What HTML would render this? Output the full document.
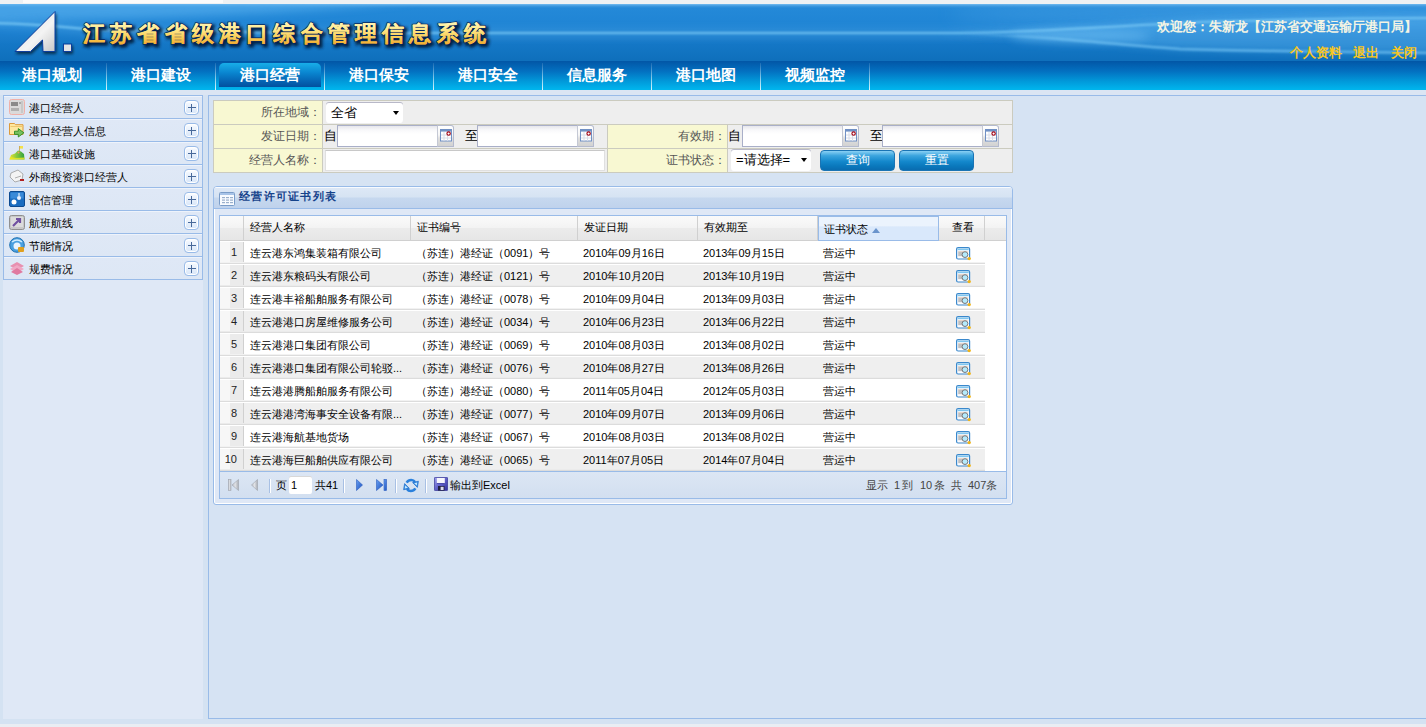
<!DOCTYPE html>
<html><head><meta charset="utf-8">
<style>
*{margin:0;padding:0;box-sizing:border-box}
html,body{width:1426px;height:727px;overflow:hidden}
body{position:relative;background:#d4e2f2;font-family:"Liberation Sans",sans-serif;font-size:12px;color:#000}
.abs{position:absolute}
#topstrip{left:0;top:0;width:1426px;height:4px;background:#eef1f3}
#botstrip{left:0;top:724px;width:1426px;height:3px;background:#e9edf3}
#banner{left:0;top:4px;width:1426px;height:57px;overflow:hidden;background:linear-gradient(to bottom,#74bcf0 0px,#3e98de 2px,#2489d8 4px,#1f84d4 22px,#1d80d0 28px,#1a7ccb 34px,#1477c6 40px,#0f70bc 56px)}
#nav{left:0;top:61px;width:1426px;height:29px;background:linear-gradient(to bottom,#0256a6 0%,#0370c0 35%,#0199da 70%,#00b6ee 100%)}
#navstrip{left:0;top:90px;width:1426px;height:5px;background:#dbe5f3}
.navsep{position:absolute;top:2px;width:1px;height:27px;background:linear-gradient(to bottom,rgba(255,255,255,0.1),rgba(255,255,255,0.85))}
.navitem{position:absolute;top:0;height:29px;line-height:27px;width:109px;text-align:center;color:#fff;font-weight:bold;font-size:15px}
#active{left:219px;top:2px;width:102px;height:24px;border-radius:5px 5px 0 0;background:linear-gradient(to bottom,#18aee8 0%,#0a86d0 40%,#0460b0 80%,#02509e 100%)}
#leftpanel{left:3px;top:95px;width:200px;height:624px;background:#dfe8f6}
#mainpanel{left:208px;top:95px;width:1218px;height:624px;background:#d6e3f3;border-top:1px solid #99bbe8;border-left:1px solid #99bbe8;border-bottom:1px solid #99bbe8}

.title{position:absolute;left:83px;top:13px;font-size:22px;font-weight:900;letter-spacing:5.2px;white-space:nowrap;line-height:32px}
.title.sh{color:#0a2a58;-webkit-text-stroke:2.2px #0a2656;text-shadow:1px 2px 3px #031a40;left:83px;top:14px;opacity:0.9}
.title.fg{background:linear-gradient(to bottom,#fffbd0 0%,#fff2a0 30%,#f8cc60 70%,#f0aa30 100%);-webkit-background-clip:text;background-clip:text;color:transparent}
#welcome span{position:absolute;top:14px;color:#f4f4e4;font-weight:bold;font-size:13px;white-space:nowrap;line-height:18px}
#links span{position:absolute;top:40px;color:#f8c622;font-weight:bold;font-size:13px;white-space:nowrap;line-height:18px}

#side{position:absolute;left:3px;top:95px;width:200px;border:1px solid #99bbe8;border-bottom:none}
.srow{position:relative;height:23px;border-bottom:1px solid #99bbe8;background:linear-gradient(to bottom,#eef3fb 0,#eef3fb 1px,#dfe8f6 1px,#dde7f5 100%);font-size:11px;color:#000}
.srow .ic{position:absolute;left:5px;top:3px;width:16px;height:16px}
.srow .tx{position:absolute;left:25px;top:1px;line-height:23px;white-space:nowrap}
.srow .pl{position:absolute;left:180px;top:4px;width:15px;height:15px;border:1px solid #99bbe8;border-radius:4px;background:linear-gradient(to bottom,#ffffff 0,#ffffff 1px,#f2f7fe 2px,#d8e6f8 100%);box-shadow:inset 0 0 0 1px #fff}
.srow .pl:before{content:"";position:absolute;left:2.5px;top:5.8px;width:8px;height:1.4px;background:#48699a}
.srow .pl:after{content:"";position:absolute;left:5.8px;top:2.5px;width:1.4px;height:8px;background:#48699a}

#form{position:absolute;left:213px;top:100px;width:800px;height:73px;background:#eeeeee;border:1px solid #cbcbbf}
.fl{position:absolute;background:#f8f8d2;color:#555;font-size:12px;text-align:right;line-height:23px;padding-right:1px;white-space:nowrap}
.hl{position:absolute;height:1px;background:#cbcbbf}
.vl{position:absolute;width:1px;background:#cbcbbf}
.sel{position:absolute;background:#fff;border-radius:3px;font-size:13px;line-height:20px;padding-left:5px;white-space:nowrap;box-shadow:0 -1px 0 #b8b8c8}
.sel .arr{position:absolute;right:4px;top:8px;width:0;height:0;border-left:3.5px solid transparent;border-right:3.5px solid transparent;border-top:4px solid #000}
.inp{position:absolute;height:22px;background:linear-gradient(to bottom,#e6e6ec 0,#f8f8fa 4px,#fff 8px);border:1px solid #a9afc8}
.cal{position:absolute;width:17px;height:22px;border:1px solid #b4bace;border-left-color:#c4c8d4;border-radius:0 3px 0 0;background:linear-gradient(to bottom,#fff 0,#f6f6f6 45%,#e0e0e0 60%,#d2d2d2 100%)}
.cal svg{position:absolute;left:1px;top:3px}
.ftx{position:absolute;font-size:13px;line-height:22px;color:#000;white-space:nowrap}
.btn{position:absolute;height:21px;width:75px;border-radius:4px;border:1px solid #1a74b4;background:linear-gradient(to bottom,#8ad0f4 0%,#3aa4de 25%,#1488cc 55%,#0a78bc 80%,#0a6cb0 100%);color:#fff;text-align:center;line-height:19px;font-size:12px}

#gp{position:absolute;left:213px;top:186px;width:800px;height:319px;border:1px solid #99bbe8;border-radius:4px 4px 3px 3px;background:#dfe8f6;box-shadow:inset 1px 0 0 #fff, inset 0 -1px 0 #fff, inset -1px 0 0 #fff}
#gph{position:absolute;left:0;top:0;width:798px;height:22px;border-bottom:1px solid #99bbe8;border-radius:3px 3px 0 0;background:linear-gradient(to bottom,#f8fbff 0,#f8fbff 1px,#dde8f6 1px,#d6e3f3 10px,#c6d8ef 11px,#bfd2ec 100%)}
#gph .t{position:absolute;left:25px;top:1px;line-height:17px;font-size:11px;font-weight:bold;color:#15428b;white-space:nowrap;letter-spacing:1.3px}
#grid{position:absolute;left:5px;top:28px;width:788px;height:284px;border:1px solid #99bbe8;background:#fff;overflow:hidden}
.gh{position:absolute;left:0;top:0;width:786px;height:25px;border-bottom:1px solid #d0d0d0;background:linear-gradient(to bottom,#fafafa 0%,#f3f3f3 50%,#ebebeb 52%,#e6e6e6 100%)}
.ghc{position:absolute;top:0;height:24px;line-height:23px;font-size:11px;padding-left:6px;white-space:nowrap;border-right:1px solid #d0d0d0}
.gr{position:absolute;left:0;width:765px;height:23px;background:linear-gradient(to bottom,#fff 0,#fff 21px,#f2f2f2 21px,#f2f2f2 22px,#dcdcdc 22px,#dcdcdc 23px)}
.gr.alt{background:linear-gradient(to bottom,#fff 0,#fff 1px,#efefef 1px,#efefef 21px,#ebebeb 21px,#ebebeb 22px,#dcdcdc 22px,#dcdcdc 23px)}
.gc{position:absolute;top:2px;height:19px;line-height:20px;font-size:11px;padding-left:5px;white-space:nowrap;overflow:hidden}
.rn{position:absolute;left:0;top:1px;width:24px;height:20px;background:linear-gradient(to right,#f7f7f7 0,#f7f7f7 10px,#ebebeb 10px,#ebebeb 100%);border-right:1px solid #d0d0d0;text-align:right;padding-right:6px;line-height:20px;font-size:11px;color:#222}
.tb{position:absolute;left:0;top:255px;width:786px;height:27px;border-top:1px solid #99bbe8;background:linear-gradient(to bottom,#dce6f4 0%,#d2dff0 100%)}

.vw{position:absolute;top:6px;width:16px;height:15px}
.sorth{position:absolute;left:598px;top:0;width:121px;height:25px;border:1px solid #99bbe8;background:linear-gradient(to bottom,#ebf3fd 0%,#ebf3fd 40%,#d9e8fb 42%,#d9e8fb 100%)}
.sorth .tx{position:absolute;left:5px;top:1px;line-height:23px;font-size:11px;white-space:nowrap}
.sorth .ar{position:absolute;left:53px;top:11px;width:0;height:0;border-left:4px solid transparent;border-right:4px solid transparent;border-bottom:5px solid #6a94cc}
.tbi{position:absolute}
.tsep{position:absolute;top:7px;width:2px;height:14px;border-left:1px solid #a8c0e4;border-right:1px solid #fff}
.ttx{position:absolute;top:0;line-height:26px;font-size:11px;white-space:nowrap;color:#000}
</style></head><body>
<div id="topstrip" class="abs"></div>
<div class="abs" style="left:23px;top:0;width:200px;height:3px;background:#fbfbfb"></div>
<div id="banner" class="abs">
<svg class="abs" style="left:0;top:0" width="1426" height="57" viewBox="0 4 1426 57">
  <defs>
   <filter id="b1" x="-10%" y="-100%" width="120%" height="300%"><feGaussianBlur stdDeviation="1.2"/></filter>
   <filter id="b4" x="-10%" y="-100%" width="120%" height="300%"><feGaussianBlur stdDeviation="4"/></filter>
   <filter id="b8" x="-20%" y="-200%" width="140%" height="500%"><feGaussianBlur stdDeviation="9"/></filter>
  </defs>
  <path d="M-20,0 L420,0 C300,14 150,20 -20,21Z" fill="#5cb2f0" opacity="0.6" filter="url(#b4)"/>
  <ellipse cx="1250" cy="14" rx="300" ry="10" fill="#5aaeec" opacity="0.4" filter="url(#b8)"/>
  <path d="M-10,23 C40,24 60,27 100,30 C200,32 300,33 460,33 L960,33 C1040,32 1100,27 1200,22 C1300,19 1380,18 1440,18" stroke="#6cbcf0" stroke-width="7" fill="none" opacity="0.3" filter="url(#b4)"/>
  <path d="M940,33 C1040,32 1100,27 1200,22 C1300,19 1380,18 1440,18 L1440,53 C1350,52 1250,51 1180,49 C1100,44 1040,35 940,33.5Z" fill="#5cb2ee" opacity="0.45" filter="url(#b4)"/>
  <ellipse cx="1080" cy="36" rx="70" ry="7" fill="#70c0f4" opacity="0.5" filter="url(#b4)"/>
  <path d="M-10,23 C40,24 60,27 100,30 C200,32 300,33 460,33 L960,33 C1040,32 1100,27 1200,22 C1300,19 1380,18 1440,18" stroke="#7ccaf6" stroke-width="2.2" fill="none" opacity="0.85" filter="url(#b1)"/>
  <linearGradient id="lcg" gradientUnits="userSpaceOnUse" x1="960" y1="0" x2="1060" y2="0"><stop offset="0" stop-color="#74c4f4" stop-opacity="0"/><stop offset="1" stop-color="#74c4f4" stop-opacity="1"/></linearGradient><path d="M940,33.2 C1040,35 1100,43 1180,49 C1250,51 1350,52 1440,53" stroke="url(#lcg)" stroke-width="2.4" fill="none" opacity="0.75" filter="url(#b1)"/>
 </svg>
 <svg class="abs" style="left:0;top:0" width="600" height="57" viewBox="0 4 600 57">
  <defs>
   <linearGradient id="lg" x1="0" y1="0" x2="1" y2="1"><stop offset="0" stop-color="#d4d4d4"/><stop offset="0.6" stop-color="#f4f4f4"/><stop offset="1" stop-color="#c8c8c8"/></linearGradient>
   <filter id="sh" x="-20%" y="-20%" width="140%" height="140%"><feGaussianBlur in="SourceAlpha" stdDeviation="1.5"/><feOffset dx="1" dy="2"/><feComponentTransfer><feFuncA type="linear" slope="0.6"/></feComponentTransfer><feMerge><feMergeNode/><feMergeNode in="SourceGraphic"/></feMerge></filter>
  <linearGradient id="tg" x1="0" y1="0" x2="0" y2="1"><stop offset="0" stop-color="#fff8c0"/><stop offset="0.35" stop-color="#ffe888"/><stop offset="0.7" stop-color="#f8c850"/><stop offset="1" stop-color="#f0a428"/></linearGradient>
  <filter id="tsh" x="-5%" y="-30%" width="110%" height="160%"><feGaussianBlur stdDeviation="1.6"/></filter>
  </defs>
  <g style="font-family:'Liberation Sans',sans-serif;font-size:22px;font-weight:bold;letter-spacing:5.2px">
  <text x="85" y="43" fill="#021838" stroke="#021838" stroke-width="3" filter="url(#tsh)" opacity="0.9">江苏省省级港口综合管理信息系统</text>
  <text x="83" y="41" fill="#0a2a60" stroke="#0a2a60" stroke-width="1.8" stroke-linejoin="round">江苏省省级港口综合管理信息系统</text>
  <text x="83" y="41" fill="url(#tg)" stroke="url(#tg)" stroke-width="0.15" stroke-linejoin="round">江苏省省级港口综合管理信息系统</text>
  </g>
  <g filter="url(#sh)">
  <polygon points="55,11.5 55,51.5 43,51.5 42.5,40 30.5,51.5 15,51.5" fill="url(#lg)" stroke="#0b3c9c" stroke-width="1" stroke-linejoin="miter"/>
  <rect x="63.5" y="44" width="8" height="7.5" fill="#e4e4e4" stroke="#0b3c9c" stroke-width="1"/>
  </g>
 </svg>
 <div id="welcome"><span style="left:1157px">欢迎您</span><span style="left:1196px">：</span><span style="left:1209px">朱新龙</span><span style="left:1248px">【江苏省交通运输厅港口局】</span></div>
 <div id="links"><span style="left:1290px">个人资料</span><span style="left:1353px">退出</span><span style="left:1391px">关闭</span></div>
</div>
<div id="nav" class="abs">
 <div id="active" class="abs"></div>
 <div class="navsep" style="left:106px"></div>
 <div class="navsep" style="left:215px"></div>
 <div class="navsep" style="left:324px"></div>
 <div class="navsep" style="left:433px"></div>
 <div class="navsep" style="left:542px"></div>
 <div class="navsep" style="left:651px"></div>
 <div class="navsep" style="left:760px"></div>
 <div class="navsep" style="left:869px"></div>
 <div class="navitem" style="left:-3px">港口规划</div>
 <div class="navitem" style="left:106px">港口建设</div>
 <div class="navitem" style="left:215px">港口经营</div>
 <div class="navitem" style="left:324px">港口保安</div>
 <div class="navitem" style="left:433px">港口安全</div>
 <div class="navitem" style="left:542px">信息服务</div>
 <div class="navitem" style="left:651px">港口地图</div>
 <div class="navitem" style="left:760px">视频监控</div>
</div>
<div id="navstrip" class="abs"></div>
<div id="leftpanel" class="abs"></div>
<div id="side"><div class="srow"><svg class="ic" viewBox="0 0 16 16"><rect x="0.5" y="0.5" width="15" height="15" rx="2" fill="#dadada" stroke="#f0b0a8"/><rect x="2" y="3" width="7" height="4" fill="#8a8a8a"/><rect x="10" y="3" width="3" height="2" fill="#a8a8a8"/><rect x="2" y="9" width="8" height="3" fill="#b0b0b0"/><rect x="12" y="2" width="2" height="12" fill="#c8c8c8"/></svg><div class="tx">港口经营人</div><div class="pl"></div></div><div class="srow"><svg class="ic" viewBox="0 0 16 16"><path d="M0.5 1.5h5l1 1.2h7.5v9.8H0.5z" fill="#fde8a0" stroke="#dc9a3c"/><rect x="1.5" y="4" width="12" height="1" fill="#f0c870"/><path d="M5.5 9.2h3.8V6.6l5.6 4.2-5.6 4.2v-2.6H5.5z" fill="#78c060" stroke="#2a8a20" stroke-width="0.9"/></svg><div class="tx">港口经营人信息</div><div class="pl"></div></div><div class="srow"><svg class="ic" viewBox="0 0 16 16"><defs><linearGradient id="hg" x1="0" y1="0" x2="1" y2="0"><stop offset="0" stop-color="#e8e030"/><stop offset="0.5" stop-color="#80c840"/><stop offset="1" stop-color="#30a040"/></linearGradient></defs><path d="M0.5 14.5 L2 10 L6 8.5 L9 5.5 L12 6.5 L15 9 L15.5 14.5Z" fill="url(#hg)"/><path d="M0.5 14.5 L15.5 14.5 L15.5 12.5 L7 13 L1 12Z" fill="#f0e820" opacity="0.8"/><rect x="10.5" y="1" width="3.5" height="2.6" fill="#f4e048"/><rect x="10.2" y="1" width="0.8" height="5" fill="#c8a040"/><circle cx="9.5" cy="7.5" r="1" fill="#f0a060"/></svg><div class="tx">港口基础设施</div><div class="pl"></div></div><div class="srow"><svg class="ic" viewBox="0 0 16 16"><path d="M2 5 L9 2 L14 6 L13 12 L6 14 L1 9Z" fill="#f4f4f4" stroke="#9a9a9a" stroke-width="0.8"/><path d="M6 10 L12 8" stroke="#b0b0b0"/><rect x="11" y="11" width="4" height="2" fill="#b02020"/></svg><div class="tx">外商投资港口经营人</div><div class="pl"></div></div><div class="srow"><svg class="ic" viewBox="0 0 16 16"><rect x="0.5" y="0.5" width="15" height="15" rx="1.5" fill="#1a6cc0" stroke="#0d4a90"/><rect x="1.5" y="1.5" width="13" height="6" fill="#3a8ad8"/><circle cx="5" cy="11" r="2.5" fill="#fff"/><circle cx="10" cy="7" r="2" fill="#e8f0ff"/><path d="M10 2 v3" stroke="#fff"/></svg><div class="tx">诚信管理</div><div class="pl"></div></div><div class="srow"><svg class="ic" viewBox="0 0 16 16"><rect x="0.5" y="1.5" width="15" height="14" rx="2" fill="#c8c8c8" stroke="#909090"/><rect x="2" y="3" width="12" height="10" fill="#dcdcdc"/><path d="M4 12 L11 5 M7 5 H11 V9" stroke="#7050a0" stroke-width="2.2" fill="none"/></svg><div class="tx">航班航线</div><div class="pl"></div></div><div class="srow"><svg class="ic" viewBox="0 0 16 16"><circle cx="8" cy="8" r="7.3" fill="#4aa0e0" stroke="#2070b0"/><path d="M3 5 Q8 1 13 5" stroke="#d0ecff" stroke-width="1.5" fill="none"/><circle cx="8" cy="9" r="3.5" fill="#e8f4ff"/><rect x="9" y="10" width="6" height="5" rx="1" fill="#e0a020"/></svg><div class="tx">节能情况</div><div class="pl"></div></div><div class="srow"><svg class="ic" viewBox="0 0 16 16"><path d="M1 6 L8 2 L15 6 L8 10Z" fill="#e890b0"/><path d="M1 9 L8 5 L15 9 L8 13Z" fill="#f0a8c4"/><path d="M2 12 L8 8 L14 12 L8 15Z" fill="#e07aa0"/></svg><div class="tx">规费情况</div><div class="pl"></div></div></div>
<div id="mainpanel" class="abs"></div>
<div id="form">
 <div class="fl" style="left:0;top:0;width:108px;height:23px">所在地域：</div>
 <div class="fl" style="left:0;top:24px;width:108px;height:23px">发证日期：</div>
 <div class="fl" style="left:0;top:48px;width:108px;height:23px">经营人名称：</div>
 <div class="fl" style="left:394px;top:24px;width:119px;height:23px">有效期：</div>
 <div class="fl" style="left:394px;top:48px;width:119px;height:23px">证书状态：</div>
 <div class="hl" style="left:0;top:23px;width:798px"></div>
 <div class="hl" style="left:0;top:47px;width:798px"></div>
 <div class="vl" style="left:108px;top:0;height:71px"></div>
 <div class="vl" style="left:393px;top:24px;height:47px"></div>
 <div class="vl" style="left:513px;top:24px;height:47px"></div>
 <div class="sel" style="left:112px;top:2px;width:77px;height:20px">全省<div class="arr"></div></div>
 <div class="ftx" style="left:110px;top:24px">自</div>
 <div class="inp" style="left:123px;top:24px;width:101px"></div>
 <div class="cal" style="left:223px;top:24px"><svg width="13" height="13" viewBox="0 0 13 13"><rect x="1.5" y="0.5" width="11" height="11.5" fill="#fff" stroke="#7090c4"/><rect x="2" y="1" width="10" height="1.6" fill="#7090c4"/><g stroke="#d8dce8" stroke-width="1"><path d="M5 3v9M8.5 3v9M2 6h10M2 9h10"/></g><circle cx="9.6" cy="4.6" r="1.7" fill="#fff" stroke="#a00012" stroke-width="1.1"/></svg></div>
 <div class="ftx" style="left:251px;top:24px">至</div>
 <div class="inp" style="left:263px;top:24px;width:101px"></div>
 <div class="cal" style="left:363px;top:24px"><svg width="13" height="13" viewBox="0 0 13 13"><rect x="1.5" y="0.5" width="11" height="11.5" fill="#fff" stroke="#7090c4"/><rect x="2" y="1" width="10" height="1.6" fill="#7090c4"/><g stroke="#d8dce8" stroke-width="1"><path d="M5 3v9M8.5 3v9M2 6h10M2 9h10"/></g><circle cx="9.6" cy="4.6" r="1.7" fill="#fff" stroke="#a00012" stroke-width="1.1"/></svg></div>
 <div class="inp" style="left:111px;top:49px;width:280px;height:21px;background:#fff;border-color:#e0e0e0;border-top-color:#c8c8c8"></div>
 <div class="ftx" style="left:514px;top:24px">自</div>
 <div class="inp" style="left:528px;top:24px;width:101px"></div>
 <div class="cal" style="left:628px;top:24px"><svg width="13" height="13" viewBox="0 0 13 13"><rect x="1.5" y="0.5" width="11" height="11.5" fill="#fff" stroke="#7090c4"/><rect x="2" y="1" width="10" height="1.6" fill="#7090c4"/><g stroke="#d8dce8" stroke-width="1"><path d="M5 3v9M8.5 3v9M2 6h10M2 9h10"/></g><circle cx="9.6" cy="4.6" r="1.7" fill="#fff" stroke="#a00012" stroke-width="1.1"/></svg></div>
 <div class="ftx" style="left:656px;top:24px">至</div>
 <div class="inp" style="left:668px;top:24px;width:101px"></div>
 <div class="cal" style="left:768px;top:24px"><svg width="13" height="13" viewBox="0 0 13 13"><rect x="1.5" y="0.5" width="11" height="11.5" fill="#fff" stroke="#7090c4"/><rect x="2" y="1" width="10" height="1.6" fill="#7090c4"/><g stroke="#d8dce8" stroke-width="1"><path d="M5 3v9M8.5 3v9M2 6h10M2 9h10"/></g><circle cx="9.6" cy="4.6" r="1.7" fill="#fff" stroke="#a00012" stroke-width="1.1"/></svg></div>
 <div class="sel" style="left:517px;top:49px;width:80px;height:21px">=请选择=<div class="arr"></div></div>
 <div class="btn" style="left:606px;top:49px">查询</div>
 <div class="btn" style="left:685px;top:49px">重置</div>
</div>
<div id="gp">
 <div id="gph"><svg style="position:absolute;left:5px;top:5px" width="16" height="14" viewBox="0 0 16 14"><rect x="0.5" y="0.5" width="15" height="13" rx="1" fill="#f8fbff" stroke="#7a9cc8"/><rect x="1" y="1" width="14" height="2" fill="#a8c4e8"/><g fill="#9ab0cc"><rect x="3" y="5" width="3" height="1.2"/><rect x="7" y="5" width="3" height="1.2"/><rect x="11" y="5" width="3" height="1.2"/><rect x="3" y="7.5" width="3" height="1.2"/><rect x="7" y="7.5" width="3" height="1.2"/><rect x="11" y="7.5" width="3" height="1.2"/><rect x="3" y="10" width="3" height="1.2"/><rect x="7" y="10" width="3" height="1.2"/><rect x="11" y="10" width="3" height="1.2"/></g></svg><div class="t">经营许可证书列表</div></div>
 <div id="grid"><div class="gh"><div class="ghc" style="left:0px;width:24px"></div><div class="ghc" style="left:24px;width:167px">经营人名称</div><div class="ghc" style="left:191px;width:167px">证书编号</div><div class="ghc" style="left:358px;width:120px">发证日期</div><div class="ghc" style="left:478px;width:120px">有效期至</div><div class="sorth"><div class="tx">证书状态</div><div class="ar"></div></div><div class="ghc" style="left:719px;width:46px;padding-left:2px;text-align:center">查看</div></div><div class="gr" style="top:25px"><div class="rn">1</div><div class="gc" style="left:25px;width:166px">连云港东鸿集装箱有限公司</div><div class="gc" style="left:191px;width:168px">（苏连）港经证（0091）号</div><div class="gc" style="left:358px;width:120px">2010年09月16日</div><div class="gc" style="left:478px;width:120px">2013年09月15日</div><div class="gc" style="left:598px;width:120px">营运中</div><div class="vw" style="left:736px"><svg width="16" height="15" viewBox="0 0 16 15"><rect x="0.6" y="0.6" width="13" height="11.4" rx="1.5" fill="#fdfdff" stroke="#3a88cc" stroke-width="1.2"/><rect x="1.5" y="1.6" width="11.2" height="1.6" fill="#80c6ee"/><rect x="2.2" y="4.2" width="5" height="5" fill="#c0c0c0"/><rect x="2.2" y="4.2" width="10" height="0.8" fill="#f0d8c8"/><circle cx="9" cy="7.6" r="2.9" fill="#b4eafc" stroke="#6e6a6a" stroke-width="0.9"/><circle cx="13.2" cy="11.6" r="1.7" fill="#f0b418"/></svg></div></div><div class="gr alt" style="top:48px"><div class="rn">2</div><div class="gc" style="left:25px;width:166px">连云港东粮码头有限公司</div><div class="gc" style="left:191px;width:168px">（苏连）港经证（0121）号</div><div class="gc" style="left:358px;width:120px">2010年10月20日</div><div class="gc" style="left:478px;width:120px">2013年10月19日</div><div class="gc" style="left:598px;width:120px">营运中</div><div class="vw" style="left:736px"><svg width="16" height="15" viewBox="0 0 16 15"><rect x="0.6" y="0.6" width="13" height="11.4" rx="1.5" fill="#fdfdff" stroke="#3a88cc" stroke-width="1.2"/><rect x="1.5" y="1.6" width="11.2" height="1.6" fill="#80c6ee"/><rect x="2.2" y="4.2" width="5" height="5" fill="#c0c0c0"/><rect x="2.2" y="4.2" width="10" height="0.8" fill="#f0d8c8"/><circle cx="9" cy="7.6" r="2.9" fill="#b4eafc" stroke="#6e6a6a" stroke-width="0.9"/><circle cx="13.2" cy="11.6" r="1.7" fill="#f0b418"/></svg></div></div><div class="gr" style="top:71px"><div class="rn">3</div><div class="gc" style="left:25px;width:166px">连云港丰裕船舶服务有限公司</div><div class="gc" style="left:191px;width:168px">（苏连）港经证（0078）号</div><div class="gc" style="left:358px;width:120px">2010年09月04日</div><div class="gc" style="left:478px;width:120px">2013年09月03日</div><div class="gc" style="left:598px;width:120px">营运中</div><div class="vw" style="left:736px"><svg width="16" height="15" viewBox="0 0 16 15"><rect x="0.6" y="0.6" width="13" height="11.4" rx="1.5" fill="#fdfdff" stroke="#3a88cc" stroke-width="1.2"/><rect x="1.5" y="1.6" width="11.2" height="1.6" fill="#80c6ee"/><rect x="2.2" y="4.2" width="5" height="5" fill="#c0c0c0"/><rect x="2.2" y="4.2" width="10" height="0.8" fill="#f0d8c8"/><circle cx="9" cy="7.6" r="2.9" fill="#b4eafc" stroke="#6e6a6a" stroke-width="0.9"/><circle cx="13.2" cy="11.6" r="1.7" fill="#f0b418"/></svg></div></div><div class="gr alt" style="top:94px"><div class="rn">4</div><div class="gc" style="left:25px;width:166px">连云港港口房屋维修服务公司</div><div class="gc" style="left:191px;width:168px">（苏连）港经证（0034）号</div><div class="gc" style="left:358px;width:120px">2010年06月23日</div><div class="gc" style="left:478px;width:120px">2013年06月22日</div><div class="gc" style="left:598px;width:120px">营运中</div><div class="vw" style="left:736px"><svg width="16" height="15" viewBox="0 0 16 15"><rect x="0.6" y="0.6" width="13" height="11.4" rx="1.5" fill="#fdfdff" stroke="#3a88cc" stroke-width="1.2"/><rect x="1.5" y="1.6" width="11.2" height="1.6" fill="#80c6ee"/><rect x="2.2" y="4.2" width="5" height="5" fill="#c0c0c0"/><rect x="2.2" y="4.2" width="10" height="0.8" fill="#f0d8c8"/><circle cx="9" cy="7.6" r="2.9" fill="#b4eafc" stroke="#6e6a6a" stroke-width="0.9"/><circle cx="13.2" cy="11.6" r="1.7" fill="#f0b418"/></svg></div></div><div class="gr" style="top:117px"><div class="rn">5</div><div class="gc" style="left:25px;width:166px">连云港港口集团有限公司</div><div class="gc" style="left:191px;width:168px">（苏连）港经证（0069）号</div><div class="gc" style="left:358px;width:120px">2010年08月03日</div><div class="gc" style="left:478px;width:120px">2013年08月02日</div><div class="gc" style="left:598px;width:120px">营运中</div><div class="vw" style="left:736px"><svg width="16" height="15" viewBox="0 0 16 15"><rect x="0.6" y="0.6" width="13" height="11.4" rx="1.5" fill="#fdfdff" stroke="#3a88cc" stroke-width="1.2"/><rect x="1.5" y="1.6" width="11.2" height="1.6" fill="#80c6ee"/><rect x="2.2" y="4.2" width="5" height="5" fill="#c0c0c0"/><rect x="2.2" y="4.2" width="10" height="0.8" fill="#f0d8c8"/><circle cx="9" cy="7.6" r="2.9" fill="#b4eafc" stroke="#6e6a6a" stroke-width="0.9"/><circle cx="13.2" cy="11.6" r="1.7" fill="#f0b418"/></svg></div></div><div class="gr alt" style="top:140px"><div class="rn">6</div><div class="gc" style="left:25px;width:166px">连云港港口集团有限公司轮驳...</div><div class="gc" style="left:191px;width:168px">（苏连）港经证（0076）号</div><div class="gc" style="left:358px;width:120px">2010年08月27日</div><div class="gc" style="left:478px;width:120px">2013年08月26日</div><div class="gc" style="left:598px;width:120px">营运中</div><div class="vw" style="left:736px"><svg width="16" height="15" viewBox="0 0 16 15"><rect x="0.6" y="0.6" width="13" height="11.4" rx="1.5" fill="#fdfdff" stroke="#3a88cc" stroke-width="1.2"/><rect x="1.5" y="1.6" width="11.2" height="1.6" fill="#80c6ee"/><rect x="2.2" y="4.2" width="5" height="5" fill="#c0c0c0"/><rect x="2.2" y="4.2" width="10" height="0.8" fill="#f0d8c8"/><circle cx="9" cy="7.6" r="2.9" fill="#b4eafc" stroke="#6e6a6a" stroke-width="0.9"/><circle cx="13.2" cy="11.6" r="1.7" fill="#f0b418"/></svg></div></div><div class="gr" style="top:163px"><div class="rn">7</div><div class="gc" style="left:25px;width:166px">连云港港腾船舶服务有限公司</div><div class="gc" style="left:191px;width:168px">（苏连）港经证（0080）号</div><div class="gc" style="left:358px;width:120px">2011年05月04日</div><div class="gc" style="left:478px;width:120px">2012年05月03日</div><div class="gc" style="left:598px;width:120px">营运中</div><div class="vw" style="left:736px"><svg width="16" height="15" viewBox="0 0 16 15"><rect x="0.6" y="0.6" width="13" height="11.4" rx="1.5" fill="#fdfdff" stroke="#3a88cc" stroke-width="1.2"/><rect x="1.5" y="1.6" width="11.2" height="1.6" fill="#80c6ee"/><rect x="2.2" y="4.2" width="5" height="5" fill="#c0c0c0"/><rect x="2.2" y="4.2" width="10" height="0.8" fill="#f0d8c8"/><circle cx="9" cy="7.6" r="2.9" fill="#b4eafc" stroke="#6e6a6a" stroke-width="0.9"/><circle cx="13.2" cy="11.6" r="1.7" fill="#f0b418"/></svg></div></div><div class="gr alt" style="top:186px"><div class="rn">8</div><div class="gc" style="left:25px;width:166px">连云港港湾海事安全设备有限...</div><div class="gc" style="left:191px;width:168px">（苏连）港经证（0077）号</div><div class="gc" style="left:358px;width:120px">2010年09月07日</div><div class="gc" style="left:478px;width:120px">2013年09月06日</div><div class="gc" style="left:598px;width:120px">营运中</div><div class="vw" style="left:736px"><svg width="16" height="15" viewBox="0 0 16 15"><rect x="0.6" y="0.6" width="13" height="11.4" rx="1.5" fill="#fdfdff" stroke="#3a88cc" stroke-width="1.2"/><rect x="1.5" y="1.6" width="11.2" height="1.6" fill="#80c6ee"/><rect x="2.2" y="4.2" width="5" height="5" fill="#c0c0c0"/><rect x="2.2" y="4.2" width="10" height="0.8" fill="#f0d8c8"/><circle cx="9" cy="7.6" r="2.9" fill="#b4eafc" stroke="#6e6a6a" stroke-width="0.9"/><circle cx="13.2" cy="11.6" r="1.7" fill="#f0b418"/></svg></div></div><div class="gr" style="top:209px"><div class="rn">9</div><div class="gc" style="left:25px;width:166px">连云港海航基地货场</div><div class="gc" style="left:191px;width:168px">（苏连）港经证（0067）号</div><div class="gc" style="left:358px;width:120px">2010年08月03日</div><div class="gc" style="left:478px;width:120px">2013年08月02日</div><div class="gc" style="left:598px;width:120px">营运中</div><div class="vw" style="left:736px"><svg width="16" height="15" viewBox="0 0 16 15"><rect x="0.6" y="0.6" width="13" height="11.4" rx="1.5" fill="#fdfdff" stroke="#3a88cc" stroke-width="1.2"/><rect x="1.5" y="1.6" width="11.2" height="1.6" fill="#80c6ee"/><rect x="2.2" y="4.2" width="5" height="5" fill="#c0c0c0"/><rect x="2.2" y="4.2" width="10" height="0.8" fill="#f0d8c8"/><circle cx="9" cy="7.6" r="2.9" fill="#b4eafc" stroke="#6e6a6a" stroke-width="0.9"/><circle cx="13.2" cy="11.6" r="1.7" fill="#f0b418"/></svg></div></div><div class="gr alt" style="top:232px"><div class="rn">10</div><div class="gc" style="left:25px;width:166px">连云港海巨船舶供应有限公司</div><div class="gc" style="left:191px;width:168px">（苏连）港经证（0065）号</div><div class="gc" style="left:358px;width:120px">2011年07月05日</div><div class="gc" style="left:478px;width:120px">2014年07月04日</div><div class="gc" style="left:598px;width:120px">营运中</div><div class="vw" style="left:736px"><svg width="16" height="15" viewBox="0 0 16 15"><rect x="0.6" y="0.6" width="13" height="11.4" rx="1.5" fill="#fdfdff" stroke="#3a88cc" stroke-width="1.2"/><rect x="1.5" y="1.6" width="11.2" height="1.6" fill="#80c6ee"/><rect x="2.2" y="4.2" width="5" height="5" fill="#c0c0c0"/><rect x="2.2" y="4.2" width="10" height="0.8" fill="#f0d8c8"/><circle cx="9" cy="7.6" r="2.9" fill="#b4eafc" stroke="#6e6a6a" stroke-width="0.9"/><circle cx="13.2" cy="11.6" r="1.7" fill="#f0b418"/></svg></div></div><div class="tb">
 <svg class="tbi" style="left:8px;top:7px" width="11" height="12" viewBox="0 0 11 12"><defs><linearGradient id="gg" x1="0" y1="0" x2="1" y2="0"><stop offset="0" stop-color="#b8bcc4"/><stop offset="0.5" stop-color="#e0e2e6"/><stop offset="1" stop-color="#a8acb4"/></linearGradient></defs><rect x="0.5" y="0.5" width="2.5" height="11" fill="url(#gg)" stroke="#a0a4ac" stroke-width="0.6"/><path d="M10.5 0.5 L4 6 L10.5 11.5Z" fill="url(#gg)" stroke="#a0a4ac" stroke-width="0.6"/></svg>
 <svg class="tbi" style="left:31px;top:7px" width="7" height="12" viewBox="0 0 7 12"><path d="M6.5 0.5 L0.5 6 L6.5 11.5Z" fill="url(#gg)" stroke="#a0a4ac" stroke-width="0.6"/></svg>
 <div class="tsep" style="left:49px"></div>
 <div class="ttx" style="left:56px">页</div>
 <div style="position:absolute;left:69px;top:5px;width:23px;height:17px;background:#fff;border-radius:2px;box-shadow:0 -1px 0 #d8d8d8"></div>
 <div class="ttx" style="left:71px">1</div>
 <div class="ttx" style="left:95px">共41</div>
 <div class="tsep" style="left:123px"></div>
 <svg class="tbi" style="left:136px;top:7px" width="7" height="12" viewBox="0 0 7 12"><defs><linearGradient id="bg2" x1="0" y1="0" x2="1" y2="1"><stop offset="0" stop-color="#6aa0f0"/><stop offset="1" stop-color="#1a50c0"/></linearGradient></defs><path d="M0.5 0.5 L6.5 6 L0.5 11.5Z" fill="url(#bg2)" stroke="#2a5cc0" stroke-width="0.6"/></svg>
 <svg class="tbi" style="left:156px;top:7px" width="11" height="12" viewBox="0 0 11 12"><path d="M0.5 0.5 L7 6 L0.5 11.5Z" fill="url(#bg2)" stroke="#2a5cc0" stroke-width="0.6"/><rect x="8" y="0.5" width="2.5" height="11" fill="url(#bg2)" stroke="#2a5cc0" stroke-width="0.6"/></svg>
 <div class="tsep" style="left:175px"></div>
 <svg class="tbi" style="left:183px;top:6px" width="16" height="15" viewBox="0 0 16 15"><g fill="none"><path d="M3.6 4.6 C4.8 2.8 6.4 2 8.2 2 C10 2 11.2 2.8 12 4" stroke="#2a80dc" stroke-width="2.6"/><path d="M12.4 10.4 C11.2 12.2 9.6 13 7.8 13 C6 13 4.8 12.2 4 11" stroke="#2a80dc" stroke-width="2.6"/></g><path d="M9.6 4.6 L15.4 3.2 L14.4 9.4Z" fill="#3a8ee4" stroke="#1c6cc8" stroke-width="0.7"/><path d="M6.4 10.4 L0.6 11.8 L1.6 5.6Z" fill="#3a8ee4" stroke="#1c6cc8" stroke-width="0.7"/><path d="M11.2 5.2 L14.2 4.6 L13.8 7.6Z" fill="#c4e8ff"/><path d="M4.8 9.8 L1.8 10.4 L2.2 7.4Z" fill="#c4e8ff"/></svg>
 <div class="tsep" style="left:205px"></div>
 <svg class="tbi" style="left:214px;top:5px" width="14" height="14" viewBox="0 0 14 14"><defs><linearGradient id="sv" x1="0" y1="0" x2="1" y2="1"><stop offset="0" stop-color="#a0a0f0"/><stop offset="0.5" stop-color="#6060c8"/><stop offset="1" stop-color="#30309a"/></linearGradient></defs><rect x="0.4" y="0.4" width="13.2" height="13.2" rx="0.8" fill="url(#sv)" stroke="#3a3a98" stroke-width="0.8"/><rect x="2.8" y="1" width="8" height="5.6" fill="#f6f6fc"/><rect x="2.8" y="6" width="8" height="0.8" fill="#3030a0"/><rect x="4" y="9" width="6.5" height="4.6" fill="#202040"/><rect x="6.6" y="9.8" width="3" height="3.2" fill="#dcdcee"/></svg>
 <div class="ttx" style="left:230px">输出到Excel</div>
 <div class="ttx" style="left:646px;color:#444">显示</div><div class="ttx" style="left:674px;color:#444">1</div><div class="ttx" style="left:682px;color:#444">到</div><div class="ttx" style="left:700px;color:#444">10</div><div class="ttx" style="left:714px;color:#444">条</div><div class="ttx" style="left:731px;color:#444">共</div><div class="ttx" style="left:748px;color:#444">407条</div>
</div></div>
</div>
<div id="botstrip" class="abs"></div>
</body></html>
